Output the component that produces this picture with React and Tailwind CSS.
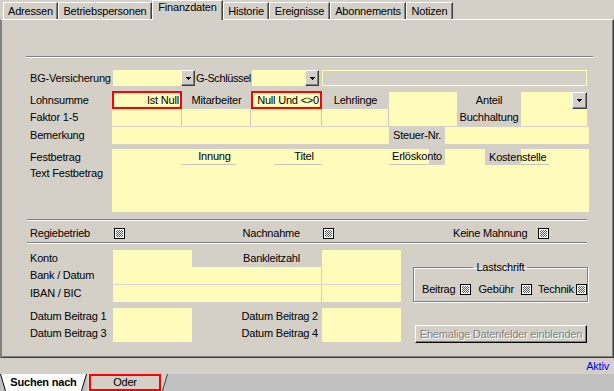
import React from 'react';

// Access-style "Finanzdaten" form
const YEL = 'bg-[#fffbbb]';

const TABS = [
  { label: 'Adressen', w: 'w-[55px]' },
  { label: 'Betriebspersonen', w: 'w-[94px]' },
  { label: 'Finanzdaten', w: 'w-[71px]', active: true },
  { label: 'Historie', w: 'w-[46px]' },
  { label: 'Ereignisse', w: 'w-[61px]' },
  { label: 'Abonnements', w: 'w-[76px]' },
  { label: 'Notizen', w: 'w-[47px]' },
];

const DropBtn = ({ w = 'w-[14px]', h = 'h-[16px]' }) => (
  <span className={`flex items-center justify-center shrink-0 ${w} ${h} bg-[#d4d0c8] border-t border-l border-t-white border-l-white border-r border-b border-r-[#404040] border-b-[#404040] shadow-[inset_-1px_-1px_0_#808080]`}>
    <svg width="5" height="3" viewBox="0 0 5 3" shapeRendering="crispEdges">
      <path d="M0 0h5v1H0zM1 1h3v1H1zM2 2h1v1H2z" fill="#000" />
    </svg>
  </span>
);

const Check = ({ className = '' }) => (
  <span className={`inline-block shrink-0 w-[11px] h-[11px] border border-black shadow-[inset_0_0_0_1px_#fff] bg-[repeating-conic-gradient(#555555_0_25%,#ffffff_0_50%)] bg-[length:2px_2px] ${className}`} />
);

const Etched = ({ className = '' }) => (
  <div className={`h-[2px] border-t border-t-[#808080] border-b border-b-white ${className}`} />
);

const Tab = ({ label, w, active }) =>
  active ? (
    <div className={`${w} relative z-10 -mb-px h-[20px] pb-[6px] flex items-center justify-center bg-[#d4d0c8] border-t border-l border-t-white border-l-white border-r border-r-[#404040] shadow-[inset_-1px_0_0_#808080]`}>
      {label}
    </div>
  ) : (
    <div className={`${w} h-[17px] flex items-center justify-center border-t border-l border-t-white border-l-white border-r border-r-[#404040] shadow-[inset_-1px_0_0_#808080]`}>
      {label}
    </div>
  );

export default function App() {
  return (
    <div className="w-[614px] h-[391px] bg-[#d4d0c8] flex flex-col overflow-hidden font-['Liberation_Sans',Arial,sans-serif] text-[11px] leading-none tracking-[-0.2px] text-black">
      {/* Register tabs */}
      <div className="h-[19px] flex items-end pl-[3px]">
        {TABS.map((t) => (
          <Tab key={t.label} {...t} />
        ))}
      </div>

      {/* Tab page */}
      <div className="h-[339px] border-t border-t-white border-l-2 border-l-[#808080] border-r border-r-[#404040] border-b border-b-[#404040] shadow-[inset_-1px_-1px_0_#808080] pl-[24px] flex flex-col">
        <Etched className="mt-[36px] w-[567px]" />

        {/* BG-Versicherung */}
        <div className="mt-[12px] flex h-[16px]">
          <div className="w-[87px] pl-[4px] flex items-center">BG-Versicherung</div>
          <div className={`w-[68px] ${YEL}`} />
          <DropBtn />
          <div className="relative z-10 w-[57px] pl-[1px] flex items-center whitespace-nowrap tracking-[-0.4px]">G-Schlüssel</div>
          <div className={`w-[53px] ${YEL}`} />
          <DropBtn />
          <div className="ml-[3px] w-[265px] border border-[#fffbbb]" />
        </div>

        {/* Lohnsumme / Faktor */}
        <div className="mt-[5px] flex">
          <div className="w-[86px] pl-[4px] flex flex-col">
            <div className="h-[18px] flex items-center">Lohnsumme</div>
            <div className="h-[17px] flex items-center">Faktor 1-5</div>
          </div>
          <div className="flex flex-col">
            <div className="flex h-[18px]">
              <div className={`w-[70px] border-2 border-[#ff0000] ${YEL} flex items-center justify-end pr-[1px]`}>Ist Null</div>
              <div className="w-[69px] flex items-center justify-center">Mitarbeiter</div>
              <div className={`w-[71px] border-2 border-[#ff0000] ${YEL} flex items-center justify-end pr-[1px]`}>Null Und &lt;&gt;0</div>
              <div className="w-[67px] flex items-center justify-center">Lehrlinge</div>
              <div className={`w-[68px] mt-[1px] h-[17px] ${YEL}`} />
            </div>
            <div className="flex h-[17px]">
              <div className={`w-[70px] ${YEL} border-r border-r-[#c8c6bc]`} />
              <div className={`w-[69px] ${YEL} border-r border-r-[#c8c6bc]`} />
              <div className={`w-[71px] ${YEL} border-r border-r-[#c8c6bc]`} />
              <div className={`w-[67px] ${YEL} border-r border-r-[#c8c6bc]`} />
              <div className={`w-[68px] ${YEL}`} />
            </div>
          </div>
          <div className="w-[64px] flex flex-col items-center">
            <div className="h-[18px] flex items-center">Anteil</div>
            <div className="h-[17px] flex items-center">Buchhaltung</div>
          </div>
          <div className="w-[66px] flex flex-col">
            <div className={`mt-[1px] h-[17px] ${YEL} flex justify-end`}>
              <DropBtn w="w-[15px]" h="h-[17px]" />
            </div>
            <div className={`h-[17px] ${YEL}`} />
          </div>
        </div>

        {/* Bemerkung */}
        <div className="mt-[1px] flex h-[17px]">
          <div className="w-[86px] pl-[4px] flex items-center">Bemerkung</div>
          <div className={`w-[277px] ${YEL}`} />
          <div className="w-[56px] pl-[4px] flex items-center">Steuer-Nr.</div>
          <div className={`w-[144px] ${YEL}`} />
        </div>

        {/* Festbetrag */}
        <div className="mt-[5px] flex">
          <div className="w-[86px] pl-[4px] flex flex-col">
            <div className="h-[16px] flex items-center">Festbetrag</div>
            <div className="h-[16px] flex items-center whitespace-nowrap">Text Festbetrag</div>
          </div>
          <div className={`w-[477px] h-[63px] ${YEL}`}>
            <div className="flex h-[16px]">
              <div className="w-[69px]" />
              <div className="w-[55px] pl-[12px] flex items-center justify-center border-b border-b-[#c8c6bc]">Innung</div>
              <div className="w-[38px]" />
              <div className="w-[48px] pl-[12px] flex items-center justify-center border-b border-b-[#c8c6bc]">Titel</div>
              <div className="w-[67px]" />
              <div className="relative z-10 w-[40px] pl-[3px] flex items-center whitespace-nowrap border-b border-b-[#c8c6bc]">Erlöskonto</div>
              <div className="w-[16px] bg-[#d4d0c8]" />
              <div className="w-[40px]" />
              <div className="relative z-10 w-[36px] pl-[4px] flex items-center whitespace-nowrap bg-[#d4d0c8]">Kostenstelle</div>
              <div className="w-[28px] border-b border-b-[#c8c6bc]" />
            </div>
          </div>
        </div>

        <Etched className="mt-[7px] ml-[1px] w-[560px]" />

        {/* Checkbox row */}
        <div className="h-[21px] pt-[3px] flex items-center">
          <div className="w-[88px] pl-[4px]">Regiebetrieb</div>
          <Check />
          <div className="w-[175px] text-right">Nachnahme</div>
          <Check className="ml-[23px]" />
          <div className="ml-[119px] w-[76px] whitespace-nowrap">Keine Mahnung</div>
          <Check className="ml-[9px]" />
        </div>

        <Etched className="ml-[1px] w-[560px]" />

        {/* Bank + Datum */}
        <div className="mt-[6px] flex">
          <div className="w-[375px] flex flex-col">
            <div className="flex">
              <div className="w-[87px] pl-[4px] flex flex-col">
                <div className="h-[17px] flex items-center">Konto</div>
                <div className="h-[17px] flex items-center">Bank / Datum</div>
                <div className="h-[18px] flex items-center">IBAN / BIC</div>
              </div>
              <div className="w-[208px] flex flex-col">
                <div className="flex h-[17px]">
                  <div className={`w-[79px] ${YEL}`} />
                  <div className="w-[129px] pr-[21px] flex items-center justify-end">Bankleitzahl</div>
                </div>
                <div className={`h-[17px] ${YEL}`} />
                <div className="h-px bg-[#dcdad0]" />
                <div className={`h-[17px] ${YEL}`} />
              </div>
              <div className="ml-px w-[79px] flex flex-col">
                <div className={`h-[34px] ${YEL}`} />
                <div className="h-px bg-[#dcdad0]" />
                <div className={`h-[17px] ${YEL}`} />
              </div>
            </div>
            <div className="mt-[6px] flex">
              <div className="w-[87px] pl-[4px] flex flex-col whitespace-nowrap">
                <div className="h-[17px] flex items-center">Datum Beitrag 1</div>
                <div className="h-[17px] flex items-center">Datum Beitrag 3</div>
              </div>
              <div className={`w-[79px] h-[34px] ${YEL}`} />
              <div className="w-[129px] pr-[3px] flex flex-col items-end whitespace-nowrap">
                <div className="h-[17px] flex items-center">Datum Beitrag 2</div>
                <div className="h-[17px] flex items-center">Datum Beitrag 4</div>
              </div>
              <div className={`ml-px w-[79px] h-[34px] ${YEL}`} />
            </div>
          </div>

          <div className="ml-[12px] w-[174px] flex flex-col">
            <fieldset className="mt-[12px] border border-[#808080] shadow-[1px_1px_0_#fff,inset_1px_1px_0_#fff]">
              <legend className="mx-auto px-[3px] h-[11px]">Lastschrift</legend>
              <div className="mt-[4px] h-[24px] pl-[8px] flex items-center whitespace-nowrap">
                <span>Beitrag</span>
                <Check className="ml-[5px]" />
                <span className="ml-[7px]">Gebühr</span>
                <Check className="ml-[7px]" />
                <span className="ml-[6px]">Technik</span>
                <Check className="ml-[2px]" />
              </div>
            </fieldset>
            <div className="mt-[23px] ml-[2px] w-[172px] h-[18px] flex items-center justify-center whitespace-nowrap text-[#808080] [text-shadow:1px_1px_0_#fff] border-t border-l border-t-white border-l-white border-r border-b border-r-black border-b-black shadow-[inset_-1px_-1px_0_#808080]">
              Ehemalige Datenfelder einblenden
            </div>
          </div>
        </div>
      </div>

      {/* Status line */}
      <div className="h-[16px] pr-[5px] flex items-center justify-end text-[#0000ff]">Aktiv</div>

      {/* Search tabs */}
      <div className="h-[17px] bg-[#c0c0c0] flex">
        <div className="relative w-[87px] h-full flex items-center justify-center font-bold">
          <svg className="absolute inset-0" width="87" height="17" viewBox="0 0 87 17">
            <polygon points="0,0 87,0 82,17 5,17" fill="#fff" />
            <line x1="0.5" y1="0" x2="5.5" y2="17" stroke="#000" />
            <line x1="86.5" y1="0" x2="81.5" y2="17" stroke="#000" />
          </svg>
          <span className="relative">Suchen nach</span>
        </div>
        <div className="relative w-[81px] h-full">
          <svg className="absolute inset-0" width="81" height="17" viewBox="0 0 81 17">
            <polygon points="0,0 81,0 76,17 0,17" fill="#d4d0c8" />
            <line x1="80.5" y1="0" x2="75.5" y2="17" stroke="#404040" />
          </svg>
          <div className="relative ml-[2px] w-[72px] h-full border-2 border-[#ff0000] flex items-center justify-center">Oder</div>
        </div>
      </div>
    </div>
  );
}
